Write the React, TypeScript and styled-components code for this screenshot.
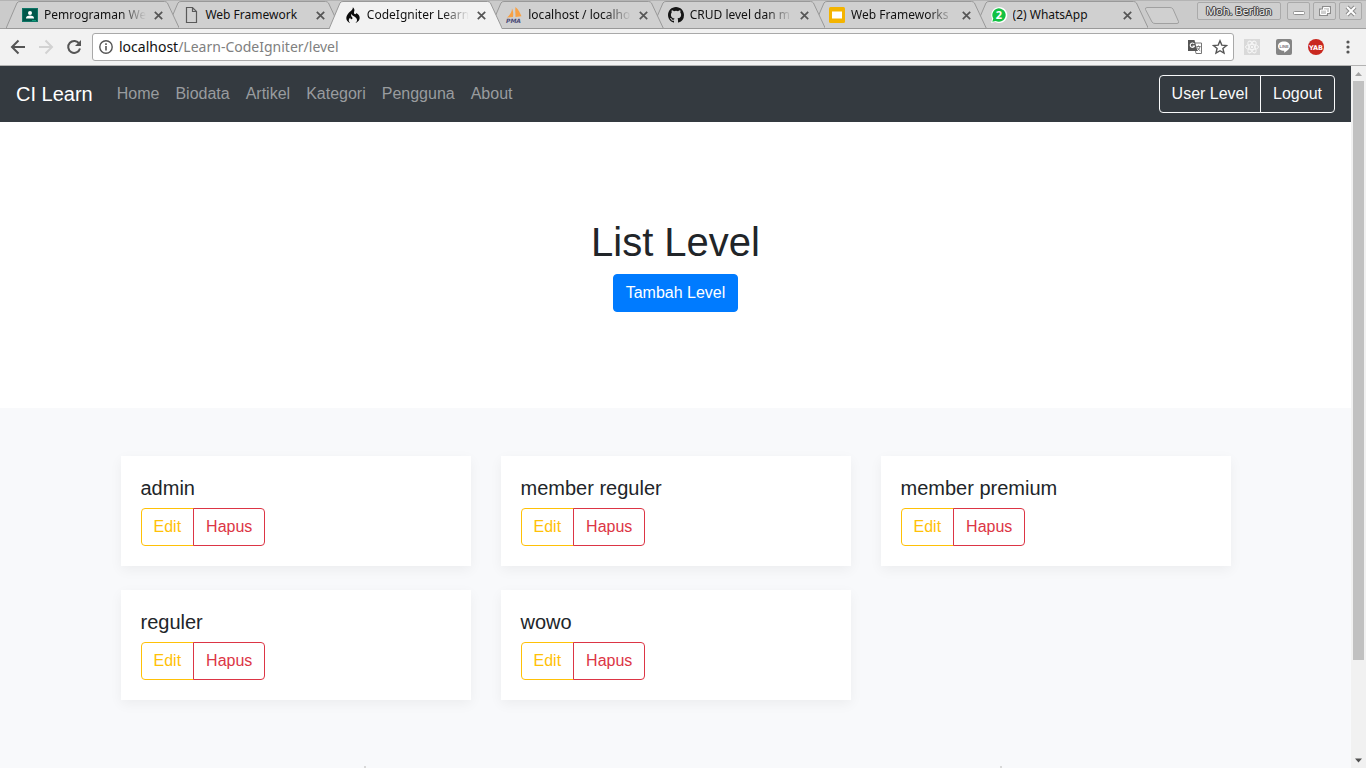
import React from "react";
import styled, { createGlobalStyle } from "styled-components";
import { SiCodeigniter } from "react-icons/si";

const GlobalStyle = createGlobalStyle`
  *, *::before, *::after { box-sizing: border-box; }
  body { margin: 0; background: #fff; }
  a { text-decoration: none; color: inherit; }
  button, input { font: inherit; }
`;

const Browser = styled.div`
  position: relative;
  display: flex;
  flex-direction: column;
  height: 100vh;
  overflow: hidden;
  font-family: "Liberation Sans", Arial, sans-serif;
  font-size: 16px;
  line-height: 24px;
  color: #212529;
`;

/* ---------- tab strip ---------- */

const TabStrip = styled.header`
  display: flex;
  justify-content: space-between;
  height: 29px;
  flex: none;
  padding-left: 6px;
  background: #cbcbcb;
  border-top: 1px solid #b4b4b4;
  box-shadow: inset 0 -1px #a0a0a0;
  font: 12px/16px "Noto Sans", sans-serif;
  color: #111;
`;

const Tabs = styled.div`
  display: flex;
  flex: 0 1 1174px;
  min-width: 0;
  align-items: stretch;
`;

const Tab = styled.div<{ $level: number }>`
  position: relative;
  z-index: ${(p) => p.$level};
  display: flex;
  align-items: center;
  flex: 0 1 auto;
  width: 174px;
  min-width: 0;
  margin-right: -12px;
  padding: 0 14px 0 16px;
`;

const TabShape = styled.svg`
  position: absolute;
  inset: 0;
  width: 100%;
  height: 100%;
  z-index: -1;
`;

const Favicon = styled.svg`
  width: 16px;
  height: 16px;
  flex: none;
  margin-right: 6px;
  overflow: visible;
`;

const TabTitle = styled.span<{ $fade?: boolean }>`
  flex: 1;
  min-width: 0;
  overflow: hidden;
  white-space: nowrap;
  mask-image: ${(p) => (p.$fade ? "linear-gradient(to right, #000 calc(100% - 26px), transparent)" : "none")};
`;

const TabClose = styled.button`
  display: flex;
  flex: none;
  width: 13px;
  height: 16px;
  padding: 4px 2px;
  border: 0;
  background: none;
  margin-left: 6px;
`;

const NewTab = styled.button`
  width: 36px;
  height: 18px;
  margin: 6px 0 0 8px;
  padding: 0;
  border: 0;
  background: none;
  flex: none;
`;

const WindowControls = styled.div`
  display: flex;
  gap: 3px;
  padding: 1px 4px 0 0;
  flex: none;
`;

const WindowButton = styled.button<{ $wide?: boolean }>`
  display: flex;
  align-items: center;
  justify-content: center;
  width: ${(p) => (p.$wide ? "84px" : "23px")};
  height: 18px;
  padding: 0;
  margin-right: ${(p) => (p.$wide ? "3px" : "0")};
  border: 1px solid #aaa;
  border-radius: 2px;
  background: #cfcfcf;
  color: #f4f4f4;
  font: 11px/14px "Noto Sans", sans-serif;
  text-shadow: 1px 0 #444, -1px 0 #444, 0 1px #444, 0 -1px #444, 1px 1px #777, -1px -1px #777;
`;

/* ---------- toolbar ---------- */

const Toolbar = styled.div`
  display: flex;
  align-items: center;
  flex: none;
  height: 37px;
  padding: 0 10px;
  background: #f2f2f2;
  border-bottom: 1px solid #b3b3b3;
`;

const ToolButton = styled.button`
  display: flex;
  flex: none;
  width: 16px;
  height: 16px;
  padding: 0;
  border: 0;
  background: none;
  margin-right: 12px;
  svg { width: 16px; height: 16px; }
`;

const AddressBar = styled.div`
  display: flex;
  align-items: center;
  flex: 1;
  min-width: 0;
  height: 28px;
  margin: 0 10px 0 -2px;
  padding: 0 5px 0 6px;
  border: 1px solid #a9a9a9;
  border-radius: 3px;
  background: #fff;
`;

const SiteInfo = styled.svg`
  width: 14px;
  height: 14px;
  flex: none;
  margin-right: 6px;
`;

const Url = styled.a`
  flex: 1;
  min-width: 0;
  overflow: hidden;
  white-space: nowrap;
  font: 14px/20px "Noto Sans", sans-serif;
  color: #808080;
`;

const UrlHost = styled.span`
  color: #111;
`;

const BarButton = styled.button`
  display: flex;
  flex: none;
  width: 16px;
  height: 16px;
  padding: 0;
  border: 0;
  background: none;
  margin-left: 9px;
`;

const Extensions = styled.div`
  display: flex;
  gap: 16px;
  flex: none;
`;

const ExtensionButton = styled.button`
  display: flex;
  width: 16px;
  height: 16px;
  padding: 0;
  border: 0;
  background: none;
`;

/* ---------- viewport ---------- */

const Viewport = styled.div`
  display: flex;
  flex: 1;
  min-height: 0;
`;

const Page = styled.div`
  flex: 1;
  min-width: 0;
  overflow: hidden;
  background: #f8f9fb;
`;

const ScrollRail = styled.div`
  display: flex;
  flex-direction: column;
  align-items: center;
  width: 15px;
  flex: none;
  background: #f1f1f1;
`;

const ScrollThumb = styled.div`
  width: 11px;
  flex: 0 1 82.5%;
  margin-bottom: auto;
  background: #c1c1c1;
`;

const ScrollArrow = styled.svg`
  width: 15px;
  height: 15px;
  flex: none;
`;

/* edges of the hidden panel that peek over the bottom of the window */
const PanelEdges = styled.div`
  position: absolute;
  bottom: 0;
  left: 50%;
  width: 638px;
  height: 2px;
  transform: translateX(-50%);
  border: solid #d8d8d8;
  border-width: 0 2px;
`;

const Navbar = styled.nav`
  display: flex;
  align-items: center;
  height: 56px;
  padding: 0 16px;
  background: #343a40;
`;

const Brand = styled.a`
  margin-right: 16px;
  font-size: 20px;
  line-height: 30px;
  color: #fff;
`;

const NavLink = styled.a`
  padding: 8px;
  color: #999c9f;
`;

const ButtonGroup = styled.div`
  display: inline-flex;
`;

const NavActions = styled.div`
  display: flex;
  margin-left: auto;
`;

const Button = styled.button<{ $color: string; $solid?: boolean }>`
  height: 38px;
  padding: 6px 12px;
  border: 1px solid ${(p) => p.$color};
  border-radius: 4px;
  background: ${(p) => (p.$solid ? p.$color : "transparent")};
  color: ${(p) => (p.$solid ? "#fff" : p.$color)};
  white-space: nowrap;

  ${ButtonGroup} > &:not(:last-child),
  ${NavActions} > &:not(:last-child) {
    border-top-right-radius: 0;
    border-bottom-right-radius: 0;
  }
  ${ButtonGroup} > &:not(:first-child),
  ${NavActions} > &:not(:first-child) {
    margin-left: -1px;
    border-top-left-radius: 0;
    border-bottom-left-radius: 0;
  }
`;

const Hero = styled.section`
  padding: 96px 16px;
  background: #fff;
  text-align: center;
`;

const HeroTitle = styled.h1`
  margin: 0 0 8px;
  font-size: 40px;
  line-height: 48px;
  font-weight: 400;
`;

const Album = styled.main`
  padding: 48px 15px;
`;

const CardGrid = styled.div`
  display: grid;
  grid-template-columns: repeat(3, 1fr);
  gap: 24px 30px;
  max-width: 1110px;
  margin: 0 auto;
`;

const Card = styled.article`
  padding: 20px;
  background: #fff;
  box-shadow: 0 4px 12px rgba(0, 0, 0, 0.05);
`;

const CardTitle = styled.h2`
  margin: 0 0 8px;
  font-size: 20px;
  line-height: 24px;
  font-weight: 400;
`;

/* ---------- data ---------- */

const iconClassroom = (
  <>
    <rect y="1" width="16" height="14" fill="#0f7566" />
    <rect x="1" y="2" width="14" height="12" fill="#00584b" />
    <circle cx="8" cy="6" r="2" fill="#fff" />
    <path d="M4 11.5V11c0-1.600 2.600-2.400 4-2.400s4 .8 4 2.400v.5z" fill="#fff" />
    <path d="M10 13h4v1h-4z" fill="#0f9d7a" />
  </>
);

const iconDocument = (
  <path d="M3.500.5h6l4 4v11h-10zM9.500.5v4h4" fill="none" stroke="#5a5a5a" strokeWidth="1.200" />
);

const iconPma = (
  <>
    <path d="M6 1.500C6 5 4 8 1 10.500l6-.5c.5-3 .3-6-1-8.500zM9.500 0c-.6 4 .1 7 0 10l6-.8C14 6 12.500 2.500 9.500 0z" fill="#f7a145" />
    <text x="0" y="16" fontFamily="DejaVu Sans, sans-serif" fontSize="6" fontWeight="700" fontStyle="italic" fill="#4a4a78">PMA</text>
  </>
);

const iconGithub = (
  <path
    fill="#161616"
    d="M8 0C3.580 0 0 3.580 0 8c0 3.540 2.290 6.530 5.470 7.590.4.070.55-.17.55-.38 0-.19-.01-.82-.01-1.490-2.010.37-2.530-.49-2.690-.94-.09-.23-.48-.94-.82-1.130-.28-.15-.68-.52-.01-.53.63-.01 1.080.58 1.230.82.72 1.210 1.870.87 2.330.66.07-.52.28-.87.51-1.070-1.780-.2-3.640-.89-3.640-3.950 0-.87.31-1.590.82-2.150-.08-.2-.36-1.020.08-2.120 0 0 .67-.21 2.200.82a7.600 7.600 0 0 1 4 0c1.530-1.040 2.200-.82 2.200-.82.44 1.100.16 1.920.08 2.120.51.56.82 1.270.82 2.150 0 3.070-1.870 3.750-3.650 3.950.29.25.54.73.54 1.480 0 1.070-.01 1.930-.01 2.200 0 .21.15.46.55.38A8.010 8.010 0 0 0 16 8c0-4.420-3.580-8-8-8z"
  />
);

const iconSlides = (
  <>
    <rect width="16" height="16" rx="1.500" fill="#f4b400" />
    <rect x="3" y="4.500" width="10" height="7" fill="#fff" />
  </>
);

const iconWhatsapp = (
  <>
    <path d="M0 16l1.200-4.200A8 8 0 1 1 4.300 15z" fill="#fff" />
    <path d="M1.300 14.800l1-3.200a6.700 6.700 0 1 1 2.400 2.300z" fill="#12c143" />
    <text x="8" y="12" textAnchor="middle" fontFamily="Noto Sans, sans-serif" fontSize="11" fontWeight="700" fill="#fff">2</text>
  </>
);

const tabs = [
  { title: "Pemrograman We", icon: iconClassroom, fade: true },
  { title: "Web Framework", icon: iconDocument },
  { title: "CodeIgniter Learn", icon: <SiCodeigniter size={16} color="#0b0b0b" />, active: true, fade: true },
  { title: "localhost / localho", icon: iconPma, fade: true },
  { title: "CRUD level dan m", icon: iconGithub, fade: true },
  { title: "Web Frameworks", icon: iconSlides, fade: true },
  { title: "(2) WhatsApp", icon: iconWhatsapp },
];

const navLinks = ["Home", "Biodata", "Artikel", "Kategori", "Pengguna", "About"];
const levels = ["admin", "member reguler", "member premium", "reguler", "wowo"];

export default function App() {
  return (
    <Browser>
      <GlobalStyle />
      <TabStrip>
        <Tabs>
          {tabs.map((tab, i) => (
            <Tab key={tab.title} $level={tab.active ? 10 : 8 - i}>
              <TabShape viewBox="0 0 174 28" preserveAspectRatio="none" aria-hidden="true">
                <path
                  d={tab.active ? "M0 28 11 2Q12 .5 14 .5H159Q161 .5 162 2L174 28" : "M0 27.500 11 2Q12 .5 14 .5H159Q161 .5 162 2L174 27.500Z"}
                  fill={tab.active ? "#f2f2f2" : "#d0d0d0"}
                  stroke="#999"
                />
              </TabShape>
              <Favicon viewBox="0 0 16 16" aria-hidden="true">{tab.icon}</Favicon>
              <TabTitle $fade={tab.fade}>{tab.title}</TabTitle>
              <TabClose aria-label={`Close ${tab.title}`}>
                <svg width="9" height="9" viewBox="0 0 9 9">
                  <path d="M.8.8l7.400 7.400M8.200.8L.8 8.200" stroke="#555" strokeWidth="1.700" />
                </svg>
              </TabClose>
            </Tab>
          ))}
          <NewTab aria-label="New tab">
            <svg width="36" height="18" viewBox="0 0 36 18">
              <path d="M3 .5H26Q28 .5 29 2L34.500 14.500Q35 16.500 33 16.500H11Q9 16.500 8 15L1.500 2.500Q1 .5 3 .5Z" fill="#d0d0d0" stroke="#a0a0a0" />
            </svg>
          </NewTab>
        </Tabs>
        <WindowControls>
          <WindowButton $wide>Moh. Berlian</WindowButton>
          <WindowButton aria-label="Minimize">
            <svg width="12" height="12" viewBox="0 0 12 12"><rect x=".5" y="6.500" width="11" height="3" rx="1" fill="#fff" stroke="#909090" /></svg>
          </WindowButton>
          <WindowButton aria-label="Restore">
            <svg width="12" height="12" viewBox="0 0 12 12">
              <g fill="none" stroke="#8c8c8c" strokeWidth="3"><path d="M4.500 2.500h6v5h-6z" /><path d="M1.500 5h6v4.500h-6z" /></g>
              <g fill="#cfcfcf" stroke="#fff"><path d="M4.500 2.500h6v5h-6z" /><path d="M1.500 5h6v4.500h-6z" /></g>
            </svg>
          </WindowButton>
          <WindowButton aria-label="Close window">
            <svg width="12" height="12" viewBox="0 0 12 12">
              <path d="M2 2l8 8M10 2l-8 8" stroke="#8c8c8c" strokeWidth="4" />
              <path d="M2 2l8 8M10 2l-8 8" stroke="#fff" strokeWidth="2" />
            </svg>
          </WindowButton>
        </WindowControls>
      </TabStrip>

      <Toolbar>
        <ToolButton aria-label="Back">
          <svg viewBox="0 0 16 16"><path d="M15 8H2.500M8.500 1.500L2 8l6.500 6.500" fill="none" stroke="#555" strokeWidth="2" /></svg>
        </ToolButton>
        <ToolButton aria-label="Forward">
          <svg viewBox="0 0 16 16"><path d="M1 8h12.500M7.500 1.500L14 8l-6.500 6.500" fill="none" stroke="#d2d2d2" strokeWidth="2" /></svg>
        </ToolButton>
        <ToolButton aria-label="Reload">
          <svg viewBox="0 0 16 16">
            <path d="M13.300 4.700A6 6 0 1 0 14 9.500" fill="none" stroke="#555" strokeWidth="2" />
            <path d="M15 1v6H9z" fill="#555" />
          </svg>
        </ToolButton>
        <AddressBar>
          <SiteInfo viewBox="0 0 14 14" aria-hidden="true">
            <circle cx="7" cy="7" r="6.200" fill="none" stroke="#555" strokeWidth="1.400" />
            <path d="M7 6v4.500M7 3.300v1.600" stroke="#555" strokeWidth="1.600" />
          </SiteInfo>
          <Url href="#">
            <UrlHost>localhost</UrlHost>/Learn-CodeIgniter/level
          </Url>
          <BarButton aria-label="Translate">
            <svg width="16" height="16" viewBox="0 0 16 16">
              <path d="M7 4h7.500v10.500H9z" fill="#fff" stroke="#777" />
              <path d="M1 1h6.500l3 11H1z" fill="#555" />
              <path d="M7.300 5A2.200 2.200 0 1 0 7.500 7H5.500" fill="none" stroke="#fff" strokeWidth="1.100" />
              <path d="M9.500 7.500h4M11.500 6.500v1M13 7.500c-.4 2-1.500 3.200-3 4.300M10.300 8.500c.6 1.500 1.700 2.600 3 3.300" fill="none" stroke="#777" />
            </svg>
          </BarButton>
          <BarButton aria-label="Bookmark this page">
            <svg width="16" height="16" viewBox="0 0 16 16">
              <path d="M8 1.800l1.800 4.300 4.700.4-3.600 3 1.100 4.600L8 11.700l-4 2.400 1.100-4.600-3.600-3 4.700-.4z" fill="none" stroke="#555" strokeWidth="1.400" />
            </svg>
          </BarButton>
        </AddressBar>
        <Extensions>
          <ExtensionButton aria-label="React Developer Tools">
            <svg width="16" height="16" viewBox="0 0 16 16">
              <rect width="16" height="16" fill="#d9d9d9" />
              <g fill="none" stroke="#f6f6f6">
                <ellipse cx="8" cy="8" rx="6.500" ry="2.600" />
                <ellipse cx="8" cy="8" rx="6.500" ry="2.600" transform="rotate(60 8 8)" />
                <ellipse cx="8" cy="8" rx="6.500" ry="2.600" transform="rotate(120 8 8)" />
              </g>
              <circle cx="8" cy="8" r="1.200" fill="#f6f6f6" />
            </svg>
          </ExtensionButton>
          <ExtensionButton aria-label="LINE">
            <svg width="16" height="16" viewBox="0 0 16 16">
              <rect width="16" height="16" rx="2" fill="#858585" />
              <path d="M8 2.500c3.400 0 6 2 6 4.700 0 2.500-2.800 4.700-5.800 6.600v-2C4.500 11.800 2 9.900 2 7.200c0-2.700 2.600-4.700 6-4.700z" fill="#fff" />
              <text x="8" y="8.500" textAnchor="middle" fontFamily="Liberation Sans, sans-serif" fontWeight="700" fontSize="4" fill="#777">LINE</text>
            </svg>
          </ExtensionButton>
          <ExtensionButton aria-label="YAB">
            <svg width="16" height="16" viewBox="0 0 16 16">
              <circle cx="8" cy="8" r="8" fill="#c9281f" />
              <text x="8" y="10.500" textAnchor="middle" fontFamily="DejaVu Sans, sans-serif" fontWeight="700" fontSize="6.500" fill="#fff">YAB</text>
            </svg>
          </ExtensionButton>
          <ExtensionButton aria-label="Menu">
            <svg width="16" height="16" viewBox="0 0 16 16" fill="#555">
              <circle cx="8" cy="3" r="1.600" /><circle cx="8" cy="8" r="1.600" /><circle cx="8" cy="13" r="1.600" />
            </svg>
          </ExtensionButton>
        </Extensions>
      </Toolbar>

      <Viewport>
        <Page>
          <Navbar>
            <Brand href="#">CI Learn</Brand>
            {navLinks.map((label) => (
              <NavLink key={label} href="#">{label}</NavLink>
            ))}
            <NavActions>
              <Button $color="#f8f9fa">User Level</Button>
              <Button $color="#f8f9fa">Logout</Button>
            </NavActions>
          </Navbar>
          <Hero>
            <HeroTitle>List Level</HeroTitle>
            <Button $color="#007bff" $solid>Tambah Level</Button>
          </Hero>
          <Album>
            <CardGrid>
              {levels.map((level) => (
                <Card key={level}>
                  <CardTitle>{level}</CardTitle>
                  <ButtonGroup>
                    <Button $color="#ffc107">Edit</Button>
                    <Button $color="#dc3545">Hapus</Button>
                  </ButtonGroup>
                </Card>
              ))}
            </CardGrid>
          </Album>
        </Page>
        <ScrollRail aria-hidden="true">
          <ScrollArrow viewBox="0 0 15 15"><path d="M4 10l3.500-4 3.500 4z" fill="#a3a3a3" /></ScrollArrow>
          <ScrollThumb />
          <ScrollArrow viewBox="0 0 15 15"><path d="M4 5.500h7l-3.500 4z" fill="#505050" /></ScrollArrow>
        </ScrollRail>
      </Viewport>
      <PanelEdges aria-hidden="true" />
    </Browser>
  );
}
